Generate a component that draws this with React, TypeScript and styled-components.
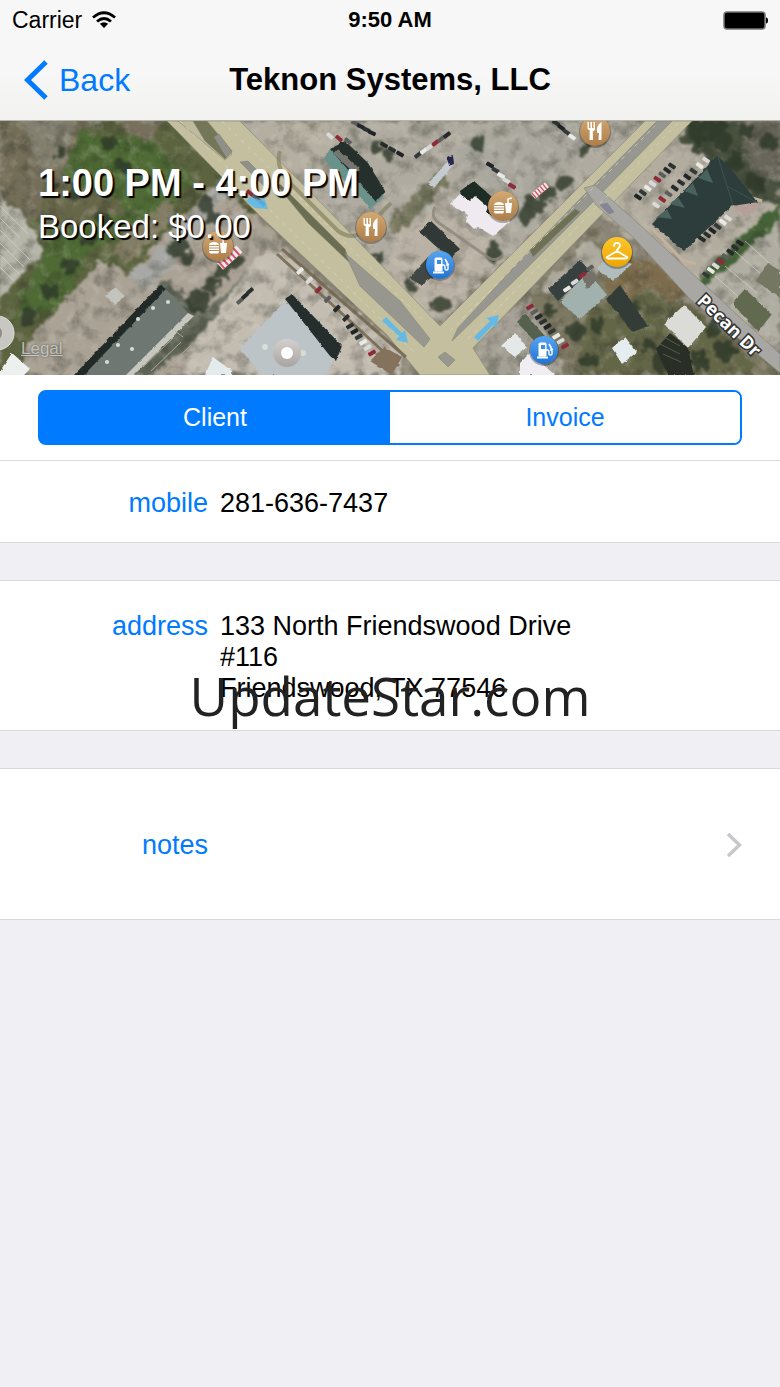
import React, { useState } from "react";
import styled, { createGlobalStyle } from "styled-components";

const GlobalStyle = createGlobalStyle`
  *, *::before, *::after { box-sizing: border-box; }
  body {
    margin: 0;
    background: #efeff4;
    color: #000;
    font-family: "Liberation Sans", Helvetica, Arial, sans-serif;
  }
  button { font-family: inherit; }
`;

const BLUE = "#007aff";
const LINE = "#d9d9dc";

const Page = styled.div`
  position: relative;
  display: flex;
  flex-direction: column;
  min-height: 100vh;
`;

const Header = styled.header`
  background: linear-gradient(#f7f7f7 60%, #f2f2f0);
  border-bottom: 1px solid #b4b4ac;
`;

const Bar = styled.div`
  display: grid;
  grid-template-columns: 1fr auto 1fr;
  align-items: center;
`;

const StatusBar = styled(Bar)`
  height: 40px;
  padding: 0 12px;
  font-size: 23px;
`;

const NavBar = styled(Bar)`
  height: 80px;
  padding: 0 24px;
`;

const Carrier = styled.div`
  display: flex;
  align-items: center;
  gap: 10px;
`;

const Clock = styled.time`
  font-size: 22px;
  font-weight: 700;
`;

const BatteryIcon = styled.svg`
  justify-self: end;
`;

const BackButton = styled.button`
  display: flex;
  align-items: center;
  gap: 11px;
  justify-self: start;
  padding: 0;
  border: 0;
  background: none;
  color: ${BLUE};
  font-size: 32px;
`;

const Title = styled.h1`
  margin: 0;
  font-size: 31px;
  font-weight: 700;
`;

const MapPanel = styled.section`
  position: relative;
  height: 254px;
  overflow: hidden;
`;

const MapDrawing = styled.svg`
  position: absolute;
  inset: 0;
  width: 100%;
  height: 100%;
`;

const Booking = styled.div`
  position: relative;
  padding: 40px 38px 0;
  color: #fff;
  text-shadow: 2px 2px 1px #000;
`;

const BookingTime = styled.p`
  margin: 0;
  font-size: 38px;
  font-weight: 700;
  line-height: 44px;
`;

const BookingPrice = styled.p`
  margin: 0;
  font-size: 33px;
  line-height: 44px;
`;

const LegalLink = styled.a`
  position: absolute;
  left: 21px;
  bottom: 16px;
  color: rgba(225, 225, 220, 0.75);
  font-size: 17px;
  text-shadow: 0 0 2px #444;
`;

const TabPanel = styled.div`
  padding: 15px 38px;
  background: #fff;
`;

const Segmented = styled.div`
  display: grid;
  grid-template-columns: 1fr 1fr;
  height: 55px;
  border: 2px solid ${BLUE};
  border-radius: 8px;
  background: linear-gradient(90deg, ${BLUE} 50%, #fff 50%);
  overflow: hidden;
`;

const Segment = styled.button<{ $active: boolean }>`
  padding: 0;
  border: 0;
  background: ${(p) => (p.$active ? BLUE : "#fff")};
  color: ${(p) => (p.$active ? "#fff" : BLUE)};
  font-size: 25px;
`;

const Details = styled.main`
  display: flex;
  flex-direction: column;
  gap: 37px;
`;

const List = styled.dl<{ $tall?: boolean }>`
  display: grid;
  grid-template-columns: 208px 1fr;
  column-gap: 12px;
  align-content: center;
  min-height: ${(p) => (p.$tall ? 151 : 83)}px;
  margin: 0;
  padding-top: 3px;
  border: solid ${LINE};
  border-width: 1px 0;
  background: #fff;
  font-size: 27px;
  line-height: 31px;
`;

const Label = styled.dt`
  color: ${BLUE};
  text-align: right;
`;

const Value = styled.dd`
  margin: 0;
`;

const PhoneLink = styled.a`
  color: inherit;
  text-decoration: none;
`;

const Address = styled.address`
  font-style: normal;
`;

const NotesButton = styled.button`
  display: grid;
  grid-template-columns: 208px 1fr;
  align-items: center;
  width: 100%;
  min-height: 152px;
  padding: 2px 38px 0 0;
  border: solid ${LINE};
  border-width: 1px 0;
  background: #fff;
  color: ${BLUE};
  font-size: 27px;
  line-height: 31px;
  text-align: right;
`;

const NotesChevron = styled.svg`
  justify-self: end;
`;

const Watermark = styled.div`
  position: absolute;
  inset: 0;
  display: flex;
  align-items: center;
  justify-content: center;
  padding-top: 4px;
  color: #222;
  font: 53px "Open Sans", "Noto Sans", sans-serif;
  pointer-events: none;
`;

/* ---------- aerial map ---------- */

type Poly = [points: string, fill: string];

const ground: Poly[] = [
  ["0,0 170,0 260,90 240,130 0,254", "#5b633f"],
  ["0,0 90,0 60,50 70,90 30,100 0,70", "#746e59"],
  ["20,0 75,0 62,45 40,50", "#838070"],
  ["78,10 150,20 195,60 150,100 90,130 60,190 10,200 45,130", "#4f6a35"],
  ["115,0 167,0 150,16 130,15", "#77705d"],
  ["45,60 105,70 125,90 60,112 35,95", "#666649"],
  ["125,112 172,76 176,92 130,140 110,135", "#827d64"],
  ["0,71 32,104 43,130 0,177", "#b7b6aa"],
  ["100,138 127,156 215,62 262,100 300,145 225,254 15,254 25,225", "#aaa295"],
  ["165,125 215,65 228,72 150,170 127,155", "#a8a9a6"],
  ["165,160 205,190 250,150 282,128 250,170 205,215 150,254 130,254", "#5f6557"],
  ["226,180 262,130 282,131 405,234 400,254 180,254 200,215", "#c3bcb1"],
  ["232,0 650,0 437,207 260,31", "#b0aba0"],
  ["260,0 350,0 330,30 300,60 258,28", "#b5afa1"],
  ["400,110 440,85 505,135 455,190 430,198 385,150", "#bab1a5"],
  ["455,40 480,10 520,0 600,0 560,60 520,105", "#aaa79e"],
  ["400,88 440,48 450,60 400,112 385,105", "#77785f"],
  ["473,227 520,184 590,112 700,200 780,240 780,254 470,254", "#7c7862"],
  ["585,82 690,0 780,0 780,240 697,170", "#b2ac9f"],
  ["690,0 780,0 780,85 745,75 705,38 680,18", "#4a523f"],
  ["735,0 780,0 780,60 755,55", "#68665a"],
  ["695,160 780,80 780,110 720,170 705,173", "#456238"],
  ["702,168 780,100 780,230 735,195", "#b0ada2"],
  ["540,165 590,118 610,135 570,180", "#aea99d"],
  ["625,135 650,138 685,170 655,205 610,190 605,160", "#7d6d4e"],
  ["470,220 530,176 545,210 565,254 470,254", "#a5a095"],
  ["585,190 650,170 690,185 760,245 750,254 580,254", "#646648"],
];

const roads: Poly[] = [
  ["167,0 240,0 330,91 440,205 645,0 692,0 473,227 490,254 420,254 387,214 260,95", "#c3bf9f"],
  ["178,0 202,0 232,33 225,39", "#bebb9f"],
  ["193,0 207,0 232,30 225,38 205,20", "#747658"],
  ["214,16 219,13 232,31 226,36", "#90908b"],
  ["240,41 248,40 270,62 264,65", "#90908b"],
  ["275,62 281,64 345,128 350,142 308,102", "#6b6e52"],
  ["345,132 400,180 430,218 424,226 360,165", "#979790"],
  ["452,220 520,154 587,87 672,0 657,0 580,78 515,145 458,207", "#979690"],
  ["533,136 580,91 575,88 530,129", "#6d7053"],
  ["584,67 595,64 640,104 697,157 780,233 780,252 748,225 690,178 634,117 596,84", "#a8a7a4"],
  ["438,236 445,231 455,239 448,246", "#97978f"],
  ["600,84 607,82 614,91 609,93", "#83859a"],
];

const buildings: Poly[] = [
  ["160,164 166,168 88,254 74,254", "#222a27"],
  ["166,168 190,194 127,254 84,254", "#6f7773"],
  ["188,192 194,195 134,254 126,254", "#c6c7be"],
  ["105,175 115,166 125,175 115,184", "#c3c4be"],
  ["0,250 12,232 30,248 24,254 0,254", "#eef0f0"],
  ["205,254 213,236 232,250 232,254", "#e3ebed"],
  ["285,180 337,230 327,254 262,254 240,228", "#bcc4c7"],
  ["285,178 292,173 342,225 336,240 330,235", "#252e2d"],
  ["370,240 384,226 402,236 392,254", "#84725d"],
  ["324,38 330,28 384,75 371,88", "#69928b"],
  ["330,28 345,20 368,42 385,70 376,81", "#25302c"],
  ["333,32 338,28 360,49 355,53", "#767671"],
  ["419,110 431,100 460,128 450,138", "#303935"],
  ["427,137 441,150 421,164 409,157", "#404744"],
  ["460,70 474,60 492,76 498,93 480,94 462,83", "#1d2c25"],
  ["450,83 460,73 470,80 475,75 488,86 486,91 497,97 507,91 510,100 493,115 478,106 474,108 466,100 468,94", "#eeeaf0"],
  ["428,63 450,37 454,43 434,67", "#c6cad1"],
  ["447,36 453,34 454,43 449,45", "#25264a"],
  ["717,35 727,43 758,82 750,90 733,84 684,130 652,103", "#2c3d3b"],
  ["732,85 758,81 760,85 748,96", "#b4a098"],
  ["548,168 580,139 590,150 558,180", "#36403e"],
  ["560,181 588,151 607,174 580,198", "#a1b1ae"],
  ["582,156 592,149 599,158 587,168", "#777069"],
  ["596,147 612,135 632,143 613,160", "#b1bdbd"],
  ["620,164 648,205 633,211 606,178", "#343c37"],
  ["612,227 625,216 637,231 622,243", "#e6edef"],
  ["664,203 684,184 706,206 688,227", "#dbdcd7"],
  ["670,212 688,227 694,254 668,254 656,228", "#292e26"],
  ["517,201 525,193 554,225 548,235", "#55604f"],
  ["501,225 515,212 527,226 515,236", "#e4e8e8"],
  ["520,242 530,232 555,254 520,254", "#f0eef2"],
  ["732,182 745,168 772,193 758,211", "#616a4e"],
  ["756,160 768,142 780,150 780,177", "#747762"],
];

/* Rows of parked cars: start, end, count, heading. */
const carRows: [number, number, number, number, number, number][] = [
  [638, 76, 672, 45, 8, 35],
  [656, 84, 706, 39, 9, 35],
  [702, 118, 728, 97, 6, 35],
  [706, 154, 740, 122, 8, 35],
  [530, 186, 565, 225, 9, -30],
  [350, 205, 372, 232, 6, -30],
  [300, 150, 346, 197, 6, -45],
  [355, 2, 372, 12, 4, 25],
  [490, 44, 512, 65, 5, 30],
  [330, 15, 348, 20, 3, 40],
  [384, 24, 400, 33, 3, 30],
  [418, 34, 447, 14, 6, -38],
  [250, 72, 262, 82, 3, 40],
  [556, 2, 572, 16, 4, 35],
  [567, 168, 590, 147, 4, -35],
  [240, 180, 250, 170, 3, -40],
];
const carPaint = ["#202424", "#dad9d9", "#252a2c", "#34393a", "#8d2c38", "#2b3030", "#e9e9e6", "#5c5d5c"];

/* Tree crowns: centre and radius. */
const trees: [number, number, number][] = [
  [207, 84, 9], [212, 96, 7], [178, 126, 11], [186, 139, 7], [198, 180, 11], [212, 164, 9],
  [232, 140, 9], [222, 150, 7], [110, 22, 8], [123, 45, 7], [55, 65, 6], [75, 72, 7],
  [105, 100, 8], [90, 118, 8], [70, 145, 9], [50, 170, 9], [28, 195, 8], [60, 30, 5],
  [440, 184, 9], [494, 131, 9], [478, 23, 7], [388, 34, 7],
  [376, 27, 6], [563, 62, 8], [548, 72, 9], [534, 84, 10], [524, 96, 8],
  [585, 26, 6], [600, 18, 6], [700, 12, 12], [722, 20, 10], [735, 40, 10],
  [756, 62, 9], [770, 20, 8], [550, 190, 6], [575, 210, 10], [598, 205, 7], [635, 185, 6],
  [660, 240, 10], [712, 210, 10], [725, 230, 10], [700, 240, 9], [648, 225, 7], [590, 240, 8],
  [376, 138, 6], [410, 165, 5], [712, 5, 12], [745, 10, 8],
];

const Cars = () => (
  <g>
    {carRows.flatMap(([x1, y1, x2, y2, n, angle], r) =>
      Array.from({ length: n }, (_, i) => {
        const t = i / (n - 1);
        const x = x1 + (x2 - x1) * t;
        const y = y1 + (y2 - y1) * t;
        return (
          <rect
            key={`${r}-${i}`}
            x={x - 4}
            y={y - 2}
            width="8"
            height="4"
            rx="1"
            fill={carPaint[(i * 3 + r) % carPaint.length]}
            transform={`rotate(${angle} ${x} ${y})`}
          />
        );
      })
    )}
  </g>
);

const Food = () => (
  <g fill="#fff">
    <path d="M-9-1c0-4 10-4 10 0zM-9 0H1v1.5H-9zM-9 2.500H1V4H-9zM-9 5H1c0 2-1 2.500-2 2.500h-6C-8 7.500-9 7-9 5z" />
    <path d="M2-3h7L8 7H3z" />
    <path d="M5-3V-7l4-1" fill="none" stroke="#fff" strokeWidth="1.500" />
  </g>
);

const Fork = () => (
  <g fill="#fff">
    <path d="M-7.500-9h1.400v6h1.500v-6h1.600v6h1.500v-6H0v7c0 1.500-1 2-2.200 2.300L-2 9h-3.500l.200-9.700c-1.200-.300-2.200-.800-2.200-2.300z" />
    <path d="M6.500-9C2-6 1-1 2.500 2H4l-.500 7h3z" />
  </g>
);

const Fuel = () => (
  <g fill="none" stroke="#fff">
    <path d="M-5 6V-6q0-1 1-1h5q1 0 1 1V6z" fill="#fff" />
    <path d="M-3-5h4v4h-4z" fill="#3c8de2" stroke="none" />
    <path d="M-7 7.500H4" strokeWidth="2" />
    <path d="M2 0h2q1 0 1 2v2q0 1 1.500 1T8 4V0L5-6l2 3v3l2-1" strokeWidth="1.400" />
  </g>
);

const Hanger = () => (
  <path
    d="M-3-6c0-4 6-4 6-.500C3-4 0-4 0-1L10 5q1 1-1 1.500H-9Q-11 6-10 5L0-1"
    fill="none"
    stroke="#fff"
    strokeWidth="1.800"
    strokeLinecap="round"
    strokeLinejoin="round"
  />
);

const pins: [number, number, number, string, React.FC][] = [
  [218, 125, 15, "url(#tan)", Food],
  [371, 106, 15, "url(#tan)", Fork],
  [503, 85, 15, "url(#tan)", Food],
  [595, 10, 15, "url(#tan)", Fork],
  [440, 144, 14, "url(#blue)", Fuel],
  [544, 229, 14, "url(#blue)", Fuel],
  [617, 131, 15, "url(#gold)", Hanger],
];

const Gradient = ({ id, from, to }: { id: string; from: string; to: string }) => (
  <linearGradient id={id} x1="0" y1="0" x2="0" y2="1">
    <stop stopColor={from} />
    <stop offset="1" stopColor={to} />
  </linearGradient>
);

const Stripes = ({ at }: { at: string }) => (
  <g transform={at}>
    <rect width="26" height="9" fill="#f3e6e8" />
    <path d="M2 0v9M7 0v9M12 0v9M17 0v9M22 0v9" stroke="#d55268" strokeWidth="2" />
  </g>
);

const AerialMap = () => (
  <MapDrawing viewBox="0 0 780 254" preserveAspectRatio="xMidYMid slice" aria-hidden="true">
    <defs>
      <Gradient id="tan" from="#d3a973" to="#ad7d48" />
      <Gradient id="blue" from="#56a5f2" to="#2273d2" />
      <Gradient id="gold" from="#fcc72e" to="#eda500" />
      <Gradient id="grey" from="#d3d0cd" to="#a8a4a1" />
      <filter id="ragged" x="-5%" y="-5%" width="110%" height="110%" colorInterpolationFilters="sRGB">
        <feTurbulence type="fractalNoise" baseFrequency="0.09" numOctaves="4" seed="4" />
        <feDisplacementMap in="SourceGraphic" scale="16" xChannelSelector="R" yChannelSelector="G" result="moved" />
        <feGaussianBlur in="moved" stdDeviation="0.8" />
      </filter>
      <filter id="worn" colorInterpolationFilters="sRGB">
        <feTurbulence type="fractalNoise" baseFrequency="0.2" numOctaves="2" seed="8" />
        <feDisplacementMap in="SourceGraphic" scale="3" xChannelSelector="R" yChannelSelector="G" />
      </filter>
      <filter id="dark" x="0" y="0" width="100%" height="100%" colorInterpolationFilters="sRGB">
        <feTurbulence type="fractalNoise" baseFrequency="0.06" numOctaves="5" seed="11" />
        <feColorMatrix values="0 0 0 0 .12  0 0 0 0 .14  0 0 0 0 .1  3 0 0 0 -1.400" />
      </filter>
      <filter id="light" x="0" y="0" width="100%" height="100%" colorInterpolationFilters="sRGB">
        <feTurbulence type="fractalNoise" baseFrequency="0.08" numOctaves="4" seed="23" />
        <feColorMatrix values="0 0 0 0 .9  0 0 0 0 .88  0 0 0 0 .82  0 3 0 0 -1.500" />
      </filter>
    </defs>

    <rect width="780" height="254" fill="#8a8576" />
    <g filter="url(#ragged)">
      {ground.map(([points, fill]) => <polygon key={points} points={points} fill={fill} />)}
    </g>
    <rect width="780" height="254" filter="url(#dark)" opacity=".28" />
    <rect width="780" height="254" filter="url(#light)" opacity=".2" />

    <g stroke="#d5d4c9" strokeWidth="1" opacity=".7">
      <path d="M0 85l28 28M0 97l20 20M0 109l30 30M0 122l24 24M0 134l20 20M0 146l14 14M735 130l38 34M745 120l35 32M725 145l32 27M715 155l34 30" />
    </g>

    <g fill="#2d3828" filter="url(#ragged)" opacity=".8">
      {trees.map(([x, y, r]) => <circle key={`${x}-${y}`} cx={x} cy={y} r={r} />)}
    </g>

    <g stroke="#85846e" strokeWidth=".6">
      {roads.map(([points, fill]) => <polygon key={points} points={points} fill={fill} />)}
    </g>
    <g fill="none" stroke="#dcd9bd" strokeWidth="1" strokeDasharray="4 5" opacity=".7">
      <path d="M222 0l200 198M180 0l235 232M450 210L655 5M468 218L680 0" />
    </g>
    <path d="M282 128l124 108M277 133l122 112" stroke="#6f624b" strokeWidth="3" opacity=".8" />
    <path d="M435 86q-5 10 4 16l50 35q7 4 14-3" fill="none" stroke="#8d867a" strokeWidth="3" opacity=".8" />
    <path d="M280 30q-5 15 8 30l50 50q15 10 25 0l28-28" fill="none" stroke="#7d7857" strokeWidth="4" opacity=".6" />
    <path d="M650 105l32 34 14 4M697 60l65 20" fill="none" stroke="#c3b39d" strokeWidth="3" />

    <g filter="url(#worn)">
      {buildings.map(([points, fill]) => <polygon key={points} points={points} fill={fill} />)}
    </g>
    <path d="M657 96l15 2-5-10M670 83l15 4-7-11M684 70l14 5-5-13M698 57l15 5-6-14" fill="#4a625d" />
    <path d="M733 84l-6-19-9-29M727 65l31 17" fill="none" stroke="#405350" />
    <path d="M662 215l18 10M660 223l20 10M663 233l18 8" stroke="#555b4c" />
    <g fill="#d9dcd7">
      <circle cx="138" cy="198" r="2" /><circle cx="153" cy="187" r="2" />
      <circle cx="118" cy="224" r="2" /><circle cx="132" cy="228" r="2" />
      <circle cx="168" cy="181" r="2" /><circle cx="107" cy="241" r="2" />
      <circle cx="265" cy="226" r="3" /><circle cx="303" cy="232" r="3" />
    </g>
    <path d="M143 246l30-29M151 250l30-29M160 254l30-29M175 210l8 6" stroke="#aba79b" strokeWidth="1" />
    <Cars />
    <Stripes at="translate(217 142) rotate(-42)" />
    <Stripes at="translate(531 73) rotate(-40) scale(.700)" />

    <g fill="#5cb9ea" opacity=".9">
      <path d="M386 196l-4 4 17 15-3 4 12 3-3-13-3 3z" />
      <path d="M478 220l-4-4 16-16-4-3 13-3-3 13-3-3z" />
      <path d="M250 76l-4 4 9 7 13 1-4-12-4 3z" />
    </g>

    {pins.map(([x, y, r, fill, Glyph]) => (
      <g key={`${x}-${y}`} transform={`translate(${x} ${y})`}>
        <circle cy="1" r={r + 1} fill="#222" opacity=".35" />
        <circle r={r} fill={fill} />
        <Glyph />
      </g>
    ))}
    <circle cx="287" cy="232" r="14" fill="url(#grey)" />
    <circle cx="287" cy="232" r="6" fill="#fff" />
    <circle cx="-3" cy="212" r="17" fill="#c9c7c2" stroke="#e3e2dd" />
    <circle cx="-6" cy="212" r="8" fill="#8e8c87" />
    <text
      transform="translate(696 181) rotate(44)"
      fill="#fff"
      stroke="#333"
      strokeWidth="3"
      paintOrder="stroke"
      fontFamily="Open Sans, sans-serif"
      fontSize="18"
      fontWeight="700"
    >
      Pecan Dr
    </text>
  </MapDrawing>
);

const tabs = ["Client", "Invoice"];

export default function App() {
  const [active, setActive] = useState("Client");
  return (
    <Page>
      <GlobalStyle />
      <Header>
        <StatusBar>
          <Carrier>
            Carrier
            <svg width="24" height="18" viewBox="0 0 24 18" fill="none" stroke="#000" strokeWidth="2.800" aria-hidden="true">
              <path d="M1 6.500Q12-3 23 6.500" />
              <path d="M5 10.500Q12 4.500 19 10.500" />
              <path d="M12 17l-4.200-4.200Q12 9.600 16.200 12.800z" fill="#000" stroke="none" />
            </svg>
          </Carrier>
          <Clock>9:50 AM</Clock>
          <BatteryIcon width="45" height="19" viewBox="0 0 45 19" aria-hidden="true">
            <rect x="1" y="1" width="41" height="17" rx="3" fill="#000" stroke="#777" strokeWidth="1.500" />
            <path d="M43 6.500q2 0 2 3t-2 3z" />
          </BatteryIcon>
        </StatusBar>
        <NavBar>
          <BackButton type="button">
            <svg width="24" height="40" viewBox="0 0 24 40" fill="none" stroke="currentColor" strokeWidth="5" aria-hidden="true">
              <path d="M22 2L3.500 20 22 38" />
            </svg>
            Back
          </BackButton>
          <Title>Teknon Systems, LLC</Title>
        </NavBar>
      </Header>

      <MapPanel>
        <AerialMap />
        <Booking>
          <BookingTime>1:00 PM - 4:00 PM</BookingTime>
          <BookingPrice>Booked: $0.00</BookingPrice>
        </Booking>
        <LegalLink href="#legal">Legal</LegalLink>
      </MapPanel>

      <TabPanel>
        <Segmented>
          {tabs.map((tab) => (
            <Segment
              key={tab}
              type="button"
              aria-pressed={tab === active}
              $active={tab === active}
              onClick={() => setActive(tab)}
            >
              {tab}
            </Segment>
          ))}
        </Segmented>
      </TabPanel>

      <Details>
        <List>
          <Label>mobile</Label>
          <Value><PhoneLink href="tel:2816367437">281-636-7437</PhoneLink></Value>
        </List>
        <List $tall>
          <Label>address</Label>
          <Value>
            <Address>
              133 North Friendswood Drive<br />
              #116<br />
              Friendswood, TX 77546
            </Address>
          </Value>
        </List>
        <NotesButton type="button">
          notes
          <NotesChevron width="16" height="26" viewBox="0 0 16 26" fill="none" stroke="#c7c7cc" strokeWidth="3.500" aria-hidden="true">
            <path d="M2 2l11.500 11L2 24" />
          </NotesChevron>
        </NotesButton>
      </Details>

      <Watermark>UpdateStar.com</Watermark>
    </Page>
  );
}
